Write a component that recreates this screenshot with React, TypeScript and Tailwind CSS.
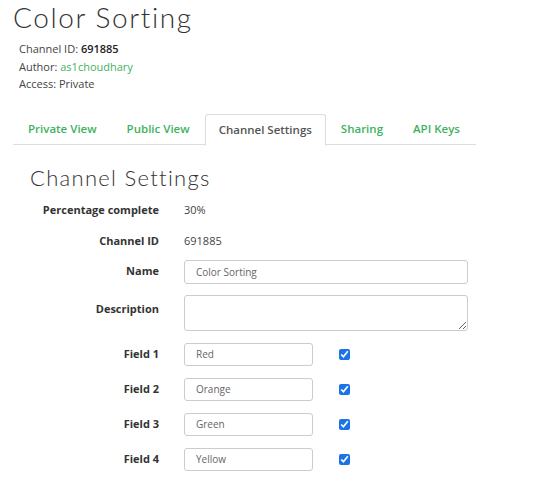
import React from "react";

const tabs = [
  { label: "Private View", active: false },
  { label: "Public View", active: false },
  { label: "Channel Settings", active: true },
  { label: "Sharing", active: false },
  { label: "API Keys", active: false },
];

const fields = [
  { label: "Field 1", value: "Red" },
  { label: "Field 2", value: "Orange" },
  { label: "Field 3", value: "Green" },
  { label: "Field 4", value: "Yellow" },
];

const body = { fontFamily: '"Open Sans", "Noto Sans", sans-serif' };
const display = { fontFamily: 'Lato, "Open Sans", sans-serif' };

export default function App() {
  return (
    <div className="w-[542px] h-[499px] bg-white text-[#333] overflow-hidden" style={body}>
      <div className="pl-[13px]">
        {/* Title */}
        <h1 className="text-[28px] leading-[32px] font-light text-[#333] tracking-[1.6px] pt-[1px]" style={display}>
          Color Sorting
        </h1>

        {/* Meta */}
        <div className="pl-[6px] pt-[7px] text-[11px] leading-[17.5px] text-[#444]">
          <p>
            Channel ID: <span className="font-semibold text-[#222]">691885</span>
          </p>
          <p>
            Author: <span className="text-[#3fb15e]">as1choudhary</span>
          </p>
          <p>Access: Private</p>
        </div>

        {/* Tabs */}
        <ul className="mt-[21px] flex w-[463px] h-[31px] border-b border-[#ddd]">
          {tabs.map((t) => (
            <li
              key={t.label}
              className={
                t.active
                  ? "px-[13px] mb-[-1px] h-[32px] flex items-center bg-white border border-[#ddd] border-b-white rounded-t-[3px] text-[11.5px] font-semibold text-[#555]"
                  : "px-[15px] h-[31px] flex items-center text-[11.5px] font-semibold text-[#3fb15e]"
              }
            >
              {t.label}
            </li>
          ))}
        </ul>

        {/* Section heading */}
        <h2 className="pl-[17px] mt-[20px] text-[22px] leading-[26px] font-light text-[#333] tracking-[1.3px]" style={display}>
          Channel Settings
        </h2>

        {/* Form */}
        <div className="mt-[8px] text-[11px]">
          <div className="flex items-center h-[24px]">
            <span className="w-[146px] text-right font-bold text-[#333]">Percentage complete</span>
            <span className="ml-[25px] text-[#444]">30%</span>
          </div>
          <div className="flex items-center h-[24px] mt-[7px]">
            <span className="w-[146px] text-right font-bold text-[#333]">Channel ID</span>
            <span className="ml-[25px] text-[#444]">691885</span>
          </div>
          <div className="flex items-center h-[24px] mt-[6px]">
            <span className="w-[146px] text-right font-bold text-[#333]">Name</span>
            <input
              readOnly
              value="Color Sorting"
              className="ml-[25px] w-[284px] h-[24px] px-[11px] border border-[#ccc] rounded-[3px] text-[10px] text-[#666] outline-none"
            />
          </div>
          <div className="flex items-start mt-[11px]">
            <span className="w-[146px] pt-[6px] text-right font-bold text-[#333]">Description</span>
            <textarea
              readOnly
              className="ml-[25px] w-[284px] h-[36px] border border-[#ccc] rounded-[3px] outline-none block"
            />
          </div>
          {fields.map((f) => (
            <div key={f.label} className="flex items-center h-[23px] mt-[12px]">
              <span className="w-[146px] text-right font-bold text-[#333]">{f.label}</span>
              <input
                readOnly
                value={f.value}
                className="ml-[25px] w-[129px] h-[23px] px-[11px] border border-[#ccc] rounded-[3px] text-[10px] text-[#666] outline-none"
              />
              <input
                type="checkbox"
                readOnly
                checked
                className="ml-[26px] w-[11px] h-[11px] accent-[#1a73e8] m-0"
              />
            </div>
          ))}
        </div>
      </div>
    </div>
  );
}
